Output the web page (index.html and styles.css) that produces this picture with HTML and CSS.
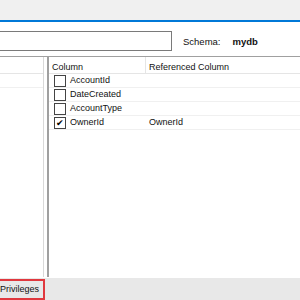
FILE: index.html
```html
<!DOCTYPE html>
<html lang="en">
<head>
    <meta charset="UTF-8">
    <title>Foreign keys</title>
    <link rel="stylesheet" href="styles.css">
</head>
<body>

<div class="titlebar"></div>

<div class="form">
    <div class="name-box"></div>
    <span class="label">Schema:</span>
    <span class="value">mydb</span>
</div>

<div class="panes">
    <div class="pane-left">
        <div class="head"></div>
        <div class="row"></div>
    </div>
    <div class="splitter"></div>
    <div class="pane-right">
        <div class="grid-head">
            <div class="c1">Column</div>
            <div class="c2">Referenced Column</div>
        </div>
        <div class="grid-row"><div class="c1"><span class="check"></span>AccountId</div><div class="c2"></div></div>
        <div class="grid-row"><div class="c1"><span class="check"></span>DateCreated</div><div class="c2"></div></div>
        <div class="grid-row"><div class="c1"><span class="check"></span>AccountType</div><div class="c2"></div></div>
        <div class="grid-row"><div class="c1"><span class="check on">&#x2714;</span>OwnerId</div><div class="c2">OwnerId</div></div>
    </div>
</div>

<div class="tabs">
    <div class="tab active">Privileges</div>
</div>

</body>
</html>
```

FILE: styles.css
```css
html, body { margin: 0; padding: 0; }
body { width: 300px; height: 300px; overflow: hidden; background: #fff;
       font-family: 'Liberation Sans', Arial, sans-serif; font-size: 9px; color: #111; }

.titlebar { height: 20px; background: #f0f0f0; border-bottom: 2px solid #0078d7; }

.form   { height: 34px; display: flex; align-items: flex-start; padding-top: 9px; box-sizing: border-box; }
.name-box { width: 171px; height: 18px; border: 1px solid #7a7a7a; border-left: none; background: #fff; }
.label  { margin-left: 11px; margin-top: 5px; font-size: 9.5px; }
.value  { margin-left: 12px; margin-top: 5px; font-weight: bold; font-size: 9.5px; }

.panes  { height: 220px; display: flex; border-top: 1px solid #a0a0a0; }
.pane-left { width: 43px; border-right: 1px solid #d9d9d9; }
.pane-left .head { height: 16px; border-bottom: 1px solid #e5e5e5; }
.pane-left .row  { height: 13px; border-bottom: 1px solid #f0f0f0; }
.splitter  { width: 3px; background: #fff; }
.pane-right { flex: 1; border-left: 2px solid #a0a0a0; }

.grid-head { display: flex; height: 16px; border-bottom: 1px solid #e5e5e5; }
.grid-head .c1 { width: 97px; padding: 4px 0 0 3px; box-sizing: border-box; border-right: 1px solid #e5e5e5; height: 100%; line-height: 12px; }
.grid-head .c2 { padding: 4px 0 0 3px; line-height: 12px; }

.grid-row { display: flex; height: 13px; border-bottom: 1px solid #f0f0f0; line-height: 13px; }
.grid-row .c1 { width: 97px; padding-left: 5px; box-sizing: border-box; display: flex; align-items: center; }
.grid-row .c2 { padding-left: 3px; }

.check { width: 10px; height: 10px; border: 1px solid #444; margin-right: 4px; background: #fff;
         font-size: 9px; line-height: 10px; text-align: center; color: #000; }

.tabs { height: 24px; background: #e8e8e8; border-top: 1px solid #fff; display: flex; }
.tab  { height: 17px; width: 43px; line-height: 17px; margin-top: 1px; font-size: 9px; }
.tab.active { border: 2px solid #e0383e; border-left: none; background: #e8e8e8; }
```
